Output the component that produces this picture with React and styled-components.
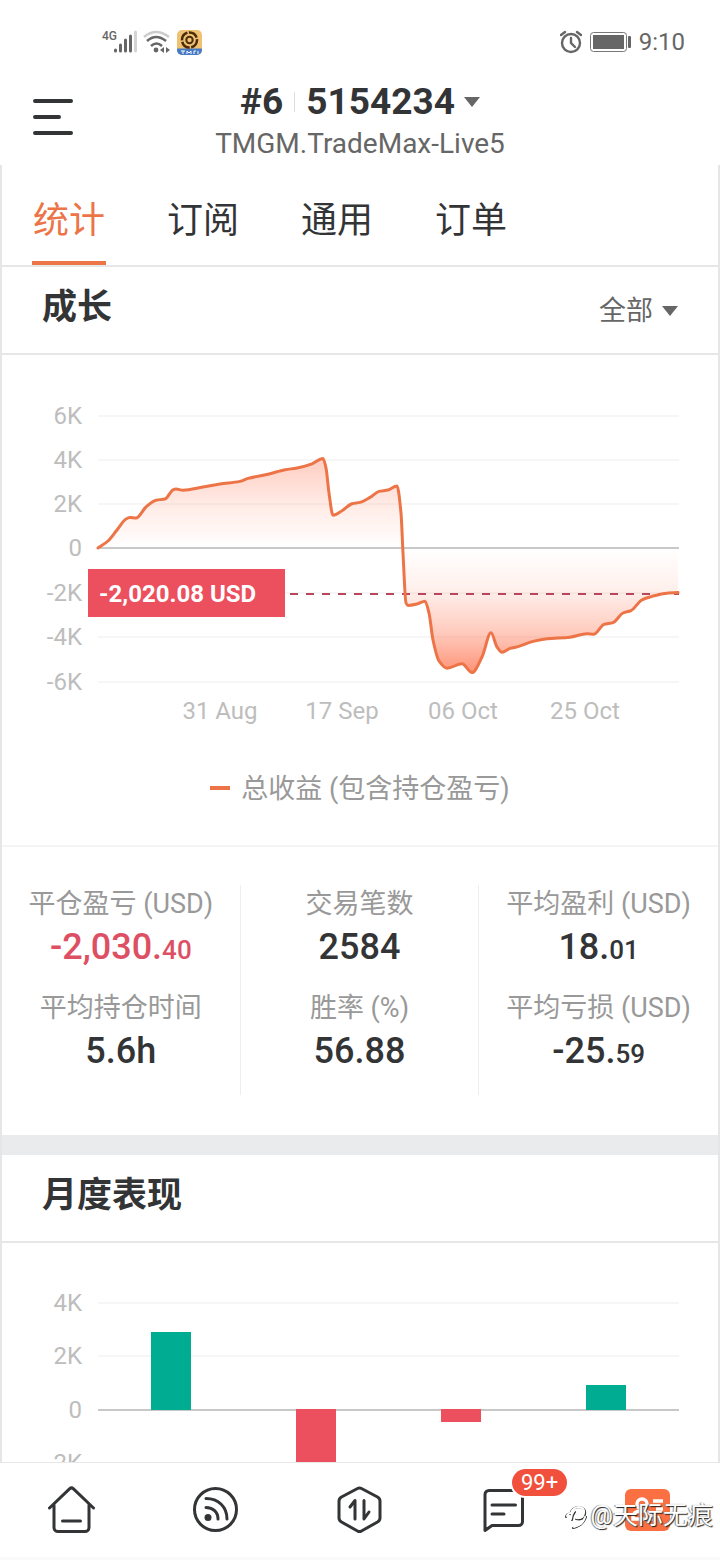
import React, { useState } from "react";
import styled, { createGlobalStyle } from "styled-components";

const ORANGE = "#ec7447";
const RED = "#ec4f5e";
const GREEN = "#00ad92";
const DARK = "#333436";

const GlobalStyle = createGlobalStyle`
  * {
    box-sizing: border-box;
  }

  body {
    margin: 0;
    background: #fff;
    color: ${DARK};
    font-family: Roboto, "Noto Sans CJK SC", sans-serif;
  }

  button,
  select {
    margin: 0;
    padding: 0;
    border: none;
    background: none;
    color: inherit;
    font: inherit;
    cursor: pointer;
  }

  svg {
    display: block;
  }
`;

const Screen = styled.div`
  display: flex;
  flex-direction: column;
  height: 100vh;
`;

const StatusBar = styled.div`
  display: flex;
  flex-shrink: 0;
  align-items: center;
  justify-content: space-between;
  height: 72px;
  padding: 12px 35px 0 102px;
  color: #666;
  font-size: 24px;
`;

const StatusGroup = styled.div`
  display: flex;
  align-items: center;
  gap: ${({ $gap }) => $gap}px;
`;

const NetworkType = styled.span`
  align-self: flex-start;
  margin-right: -4px;
  font-size: 12px;
  line-height: 12px;
  font-weight: 500;
`;

const Header = styled.header`
  display: grid;
  flex-shrink: 0;
  grid-template-columns: 1fr auto 1fr;
  align-items: start;
  height: 93px;
  padding: 8px 33px 0;
`;

const MenuButton = styled.button`
  justify-self: start;
  margin-top: 18px;
`;

const Account = styled.button`
  display: flex;
  flex-direction: column;
  align-items: center;
`;

const AccountNumber = styled.span`
  display: flex;
  align-items: center;
  font-size: 37px;
  line-height: 44px;
  font-weight: 700;
`;

const Separator = styled.span`
  width: 1px;
  height: 20px;
  margin: 0 11px;
  background: #ddd;
`;

const AccountServer = styled.span`
  font-size: 28px;
  line-height: 40px;
  color: #666;
`;

const CaretIcon = styled.svg`
  width: 16px;
  height: 10px;
  margin-left: 9px;
  fill: #666;
  pointer-events: none;
`;

const Content = styled.main`
  flex: 1;
  min-height: 0;
  overflow-y: auto;
  scrollbar-width: none;
  border: solid #e6e6e6;
  border-width: 0 2px;
`;

const Tabs = styled.div`
  display: flex;
  gap: 60px;
  height: 102px;
  padding: 0 30px;
  border-bottom: 2px solid #e6e6e6;
`;

const Tab = styled.button`
  padding: 8px 1px 0;
  border-bottom: 4px solid ${({ $active }) => ($active ? ORANGE : "transparent")};
  color: ${({ $active }) => ($active ? ORANGE : DARK)};
  font-size: 36px;
`;

const SectionHeader = styled.div`
  display: flex;
  align-items: center;
  justify-content: space-between;
  height: 88px;
  padding: 2px 40px 0;
  border-bottom: 2px solid #e6e6e6;
`;

const SectionTitle = styled.h2`
  margin: 0;
  padding-bottom: 6px;
  font-size: 35px;
  line-height: 48px;
  font-weight: 700;
`;

const Period = styled.label`
  display: flex;
  align-items: center;
  color: #666;
`;

const PeriodSelect = styled.select`
  appearance: none;
  font-size: 27px;
  line-height: 40px;
`;

const Chart = styled.svg`
  width: 100%;
  height: auto;
`;

const AxisLabel = styled.text`
  fill: #bdbdbd;
  font-size: 24px;
  text-anchor: ${({ $anchor }) => $anchor || "end"};
`;

const TagLabel = styled.text`
  fill: #fff;
  font-size: 24px;
  font-weight: 700;
`;

const Legend = styled.div`
  display: flex;
  align-items: center;
  justify-content: center;
  gap: 11px;
  height: 112px;
  padding-bottom: 8px;
  border-bottom: 2px solid #f4f4f4;
  color: #999;
  font-size: 27px;
`;

const LegendMark = styled.span`
  width: 20px;
  height: 4px;
  margin-top: 4px;
  background: ${ORANGE};
`;

const Stats = styled.div`
  display: grid;
  grid-template-columns: repeat(3, 1fr);
  padding: 38px 0 40px;
`;

const StatColumn = styled.dl`
  display: grid;
  grid-template-rows: 104px 106px;
  margin: 0;
  border-right: 1px solid #eee;
  text-align: center;

  &:last-child {
    border-right: none;
  }
`;

const StatLabel = styled.dt`
  color: #999;
  font-size: 27px;
  line-height: 38px;
`;

const StatValue = styled.dd`
  margin: 0;
  color: ${({ $negative }) => ($negative ? "#dd5064" : DARK)};
  font-size: 36px;
  line-height: 48px;
  font-weight: 500;

  small {
    font-size: 26px;
  }
`;

const Gutter = styled.div`
  height: 20px;
  background: #e9ebed;
`;

const NavBar = styled.nav`
  position: relative;
  display: grid;
  flex-shrink: 0;
  grid-template-columns: repeat(5, 1fr);
  height: 98px;
  padding-bottom: 2px;
  border-top: 1px solid #e8e8e8;
  border-bottom: 3px solid #fafafa;
  background: #fff;
`;

const NavItem = styled.a`
  display: flex;
  align-items: center;
  justify-content: center;
`;

const IconSlot = styled.span`
  position: relative;
`;

const Badge = styled.span`
  position: absolute;
  top: -16px;
  left: 32px;
  padding: 0 9px;
  border-radius: 14px;
  box-shadow: 0 0 0 2px #fff;
  background: #f1503d;
  color: #fff;
  font-size: 22px;
  line-height: 27px;
`;

const Watermark = styled.div`
  position: absolute;
  right: 7px;
  bottom: 23px;
  display: flex;
  align-items: center;
  gap: 1px;
  color: #fff;
  font-size: 25px;
  line-height: 36px;
  text-shadow: 1px 1px 1px #222, -1px 0 1px #888;
  pointer-events: none;
`;

// x and y of the profit curve, in chart units
const GROWTH = [
  [96, 193], [106, 186], [115, 175], [124, 164], [128, 162.6], [134, 163],
  [144, 152], [154, 145.2], [163, 144], [171, 134.8], [174, 134], [181, 135.2],
  [201, 132], [218, 129], [238, 126.4], [246, 123.4], [266, 119.2], [283, 114.7],
  [295, 113], [310, 108.8], [321, 103.4], [324, 113], [327, 138], [331, 160.3],
  [340, 155.8], [350, 148.8], [358, 147.4], [368, 142.4], [377, 136.4],
  [386, 135], [395, 131], [399, 158], [401, 198], [404, 248], [406, 250.4],
  [415, 249], [423, 246.2], [427, 258], [431, 285], [437, 306], [445, 313.2],
  [460, 308.8], [470, 317.6], [480, 302], [489, 277.8], [495, 292],
  [500, 297.2], [508, 293.4], [516, 291.6], [531, 286.4], [545, 283.8],
  [568, 282.2], [585, 278.8], [592, 279.2], [602, 269.4], [611, 267.6],
  [621, 258], [629, 255.6], [640, 244.8], [650, 241.4], [663, 238.4],
  [676, 237.6],
];

const GROWTH_TICKS = [
  ["6K", 61], ["4K", 105], ["2K", 149], ["0", 193],
  ["-2K", 238], ["-4K", 282], ["-6K", 327],
];

const GROWTH_DATES = [
  ["31 Aug", 218], ["17 Sep", 340], ["06 Oct", 461], ["25 Oct", 583],
];

const MONTH_TICKS = [["4K", 60], ["2K", 113], ["0", 167], ["-2K", 220]];

const MONTHS = [
  { x: 149, value: 2930 },
  { x: 294, value: -2300 },
  { x: 439, value: -480 },
  { x: 584, value: 930 },
];

// monotone cubic curve, so that the line never overshoots a point
const curve = (points) => {
  const slopes = points.slice(1).map(([x, y], i) => (y - points[i][1]) / (x - points[i][0]));
  const tangents = points.map((_, i) => {
    const before = slopes[i - 1];
    const after = slopes[i];
    if (before === undefined) return after;
    if (after === undefined) return before;
    return before * after <= 0 ? 0 : (2 * before * after) / (before + after);
  });

  return points.slice(1).reduce((path, [x, y], i) => {
    const [px, py] = points[i];
    const dx = (x - px) / 3;
    return `${path} C${px + dx} ${py + dx * tangents[i]} ${x - dx} ${y - dx * tangents[i + 1]} ${x} ${y}`;
  }, `M${points[0][0]} ${points[0][1]}`);
};

const Caret = () => (
  <CaretIcon viewBox="0 0 16 10" aria-hidden="true">
    <path d="M0 0h16L8 10z" />
  </CaretIcon>
);

const Axis = ({ ticks }) =>
  ticks.map(([label, y]) => (
    <g key={label}>
      <AxisLabel x="80" y={y + 8}>{label}</AxisLabel>
      <path
        d={`M96 ${y}H677`}
        stroke={label === "0" ? "#c8c8c8" : "#f6f6f6"}
        strokeWidth="2"
      />
    </g>
  ));

const GrowthChart = () => {
  const line = curve(GROWTH);
  return (
    <Chart viewBox="0 0 716 380" role="img" aria-label="成长">
      <defs>
        <linearGradient id="growth" gradientUnits="userSpaceOnUse" x1="0" y1="103" x2="0" y2="317">
          <stop offset="0" stopColor="#ff8f73" stopOpacity="0.45" />
          <stop offset="0.2" stopColor="#ff8f73" stopOpacity="0.2" />
          <stop offset="0.42" stopColor="#ff8f73" stopOpacity="0" />
          <stop offset="0.62" stopColor="#ff8668" stopOpacity="0.13" />
          <stop offset="0.82" stopColor="#ff7f5f" stopOpacity="0.42" />
          <stop offset="1" stopColor="#ff7855" stopOpacity="0.8" />
        </linearGradient>
      </defs>
      <Axis ticks={GROWTH_TICKS} />
      <path d={`${line} V193 H96 Z`} fill="url(#growth)" />
      <path d="M288 239H677" stroke="#b9465c" strokeWidth="2" strokeDasharray="8 8" />
      <path d={line} fill="none" stroke={ORANGE} strokeWidth="3" strokeLinecap="round" strokeLinejoin="round" />
      <rect x="86" y="214" width="197" height="48" fill={RED} />
      <TagLabel x="97" y="247">-2,020.08 USD</TagLabel>
      {GROWTH_DATES.map(([label, x]) => (
        <AxisLabel key={label} x={x} y="364" $anchor="middle">{label}</AxisLabel>
      ))}
    </Chart>
  );
};

const MonthChart = () => (
  <Chart viewBox="0 0 716 290" role="img" aria-label="月度表现">
    <Axis ticks={MONTH_TICKS} />
    {MONTHS.map(({ x, value }) => {
      const height = Math.round((Math.abs(value) * 53) / 2000);
      return (
        <rect
          key={x}
          x={x}
          y={value > 0 ? 167 - height : 166}
          width="40"
          height={height}
          fill={value > 0 ? GREEN : RED}
        />
      );
    })}
  </Chart>
);

const Stat = ({ label, value, decimals, negative }) => (
  <div>
    <StatLabel>{label}</StatLabel>
    <StatValue $negative={negative}>
      {value}
      {decimals && <small>{decimals}</small>}
    </StatValue>
  </div>
);

const SignalIcon = () => (
  <svg width="24" height="24" viewBox="0 0 24 24" strokeWidth="3" strokeLinecap="round" stroke="#666">
    <path d="M2.500 20v1M7.500 15v6M12.500 10v11M17.500 6v15" />
    <path d="M22.500 2v19" stroke="#d4d4d4" />
  </svg>
);

const WifiIcon = () => (
  <svg width="28" height="24" viewBox="0 0 28 24" fill="none" stroke="#666" strokeWidth="2.600">
    <path d="M1 7Q13 -3 26 7" stroke="#ccc" />
    <path d="M4 11Q13 3 23 11M8 16q5.500-5 11 0" />
    <circle cx="13" cy="20" r="2.400" fill="#666" stroke="none" />
    <path d="M21 17v6l-4-3zM23 17v6l4-3z" fill="#666" stroke="none" />
  </svg>
);

const AppBadgeIcon = () => (
  <svg width="25" height="25" viewBox="0 0 25 25">
    <rect width="25" height="25" rx="5" fill="#efc173" />
    <path d="M0 18.500h25V20a5 5 0 0 1-5 5H5a5 5 0 0 1-5-5z" fill="#477bc5" />
    <circle cx="12.500" cy="10" r="7.500" fill="none" stroke="#4a2b08" strokeWidth="2.500" strokeDasharray="10 1.500" />
    <circle cx="12.500" cy="10" r="3.200" fill="none" stroke="#4a2b08" strokeWidth="2" />
    <path d="M4 21h4M6 21v3M10 24v-3l2 2 2-2v3M17 24v-3h2M21 21v3" fill="none" stroke="#fff" />
  </svg>
);

const AlarmIcon = () => (
  <svg width="22" height="24" viewBox="0 0 22 24" fill="none" stroke="#666" strokeWidth="2.400" strokeLinecap="round">
    <circle cx="11" cy="13" r="9" />
    <path d="M11 8v5l4 4M1 5l4-3M21 5l-4-3" />
  </svg>
);

const BatteryIcon = () => (
  <svg width="41" height="20" viewBox="0 0 41 20">
    <rect x="0.500" y="0.500" width="36" height="19" rx="3" fill="none" stroke="#777" />
    <rect x="3" y="3" width="31" height="14" fill="#666" />
    <rect x="38" y="4" width="3" height="12" rx="1" fill="#666" />
  </svg>
);

const NavIcon = ({ children }) => (
  <svg
    width="48"
    height="48"
    viewBox="0 0 48 48"
    fill="none"
    stroke={DARK}
    strokeWidth="3"
    strokeLinecap="round"
    strokeLinejoin="round"
    aria-hidden="true"
  >
    {children}
  </svg>
);

const NAV_ITEMS = [
  {
    id: "home",
    icon: (
      <NavIcon>
        <path d="M1.500 23 21.500 3.800q2-1.800 4 0L45.500 23M6 20v22.500a4 4 0 0 0 4 4h27a4 4 0 0 0 4-4V20M14.500 36h18" />
      </NavIcon>
    ),
  },
  {
    id: "feed",
    icon: (
      <NavIcon>
        <circle cx="23.500" cy="24.500" r="21" />
        <path d="M14 13.500C26.500 13.500 35 22 35 34M14 22.500c7 0 12 4.500 12 11.500" />
        <circle cx="16" cy="32.500" r="3.500" fill={DARK} stroke="none" />
      </NavIcon>
    ),
  },
  {
    id: "trade",
    icon: (
      <NavIcon>
        <path d="M21.500 3.500q2-1.200 4 0L41.500 12q2.500 1.500 2.500 4v17q0 2.500-2.500 4L25.500 46q-2 1.200-4 0L5.500 37q-2.500-1.500-2.500-4V16q0-2.500 2.500-4z" />
        <path d="M14 22 19 15.500V34M28 15.500V34L33 27" />
      </NavIcon>
    ),
  },
  {
    id: "messages",
    badge: "99+",
    icon: (
      <NavIcon>
        <path d="M5 45.500V9.500a4 4 0 0 1 4-4h29.500a4 4 0 0 1 4 4v27a4 4 0 0 1-4 4H12z" />
        <path d="M12 20h23.500M12 29h12" />
      </NavIcon>
    ),
  },
  {
    id: "profile",
    icon: (
      <svg width="48" height="48" viewBox="0 0 48 48" fill="none" stroke="#fff" strokeWidth="3.500" aria-hidden="true">
        <rect x="1" y="4" width="45" height="42" rx="6" fill="#fa7043" stroke="none" />
        <circle cx="18" cy="19" r="5" />
        <path d="M9 34v-2q0-6 9-6t9 6v2zM29 16h10M32 24h7" />
      </svg>
    ),
  },
];

const TABS = ["统计", "订阅", "通用", "订单"];

const App = () => {
  const [activeTab, setActiveTab] = useState(TABS[0]);

  return (
    <Screen>
      <GlobalStyle />
      <StatusBar>
        <StatusGroup $gap={6}>
          <StatusGroup $gap={0}>
            <NetworkType>4G</NetworkType>
            <SignalIcon />
          </StatusGroup>
          <WifiIcon />
          <AppBadgeIcon />
        </StatusGroup>
        <StatusGroup $gap={8}>
          <AlarmIcon />
          <BatteryIcon />
          <span>9:10</span>
        </StatusGroup>
      </StatusBar>

      <Header>
        <MenuButton type="button" aria-label="菜单">
          <svg width="40" height="38" viewBox="0 0 40 38" stroke={DARK} strokeWidth="4" strokeLinecap="round">
            <path d="M2 3h36M2 19h24M2 35h36" />
          </svg>
        </MenuButton>
        <Account type="button" aria-haspopup="listbox">
          <AccountNumber>
            #6
            <Separator />
            5154234
            <Caret />
          </AccountNumber>
          <AccountServer>TMGM.TradeMax-Live5</AccountServer>
        </Account>
      </Header>

      <Content>
        <Tabs role="tablist">
          {TABS.map((tab) => (
            <Tab
              key={tab}
              type="button"
              role="tab"
              aria-selected={tab === activeTab}
              $active={tab === activeTab}
              onClick={() => setActiveTab(tab)}
            >
              {tab}
            </Tab>
          ))}
        </Tabs>

        <section>
          <SectionHeader>
            <SectionTitle>成长</SectionTitle>
            <Period>
              <PeriodSelect aria-label="成长">
                <option>全部</option>
              </PeriodSelect>
              <Caret />
            </Period>
          </SectionHeader>
          <GrowthChart />
          <Legend>
            <LegendMark />
            总收益 (包含持仓盈亏)
          </Legend>
          <Stats>
            <StatColumn>
              <Stat label="平仓盈亏 (USD)" value="-2,030." decimals="40" negative />
              <Stat label="平均持仓时间" value="5.6h" />
            </StatColumn>
            <StatColumn>
              <Stat label="交易笔数" value="2584" />
              <Stat label="胜率 (%)" value="56.88" />
            </StatColumn>
            <StatColumn>
              <Stat label="平均盈利 (USD)" value="18." decimals="01" />
              <Stat label="平均亏损 (USD)" value="-25." decimals="59" />
            </StatColumn>
          </Stats>
        </section>

        <Gutter />

        <section>
          <SectionHeader>
            <SectionTitle>月度表现</SectionTitle>
          </SectionHeader>
          <MonthChart />
        </section>
      </Content>

      <NavBar>
        {NAV_ITEMS.map(({ id, icon, badge }) => (
          <NavItem key={id} href={`#${id}`} aria-label={id}>
            <IconSlot>
              {icon}
              {badge && <Badge>{badge}</Badge>}
            </IconSlot>
          </NavItem>
        ))}
        <Watermark>
          <svg width="26" height="28" viewBox="0 0 26 28" fill="none" strokeLinecap="round">
            <path d="M2 15q1-4 4-3 2-7 9-7 7 1 6 7-1 7-9 5M11 10q-3 4-3 8M9 26q10-2 13-11" stroke="#333" strokeWidth="2" />
            <path d="M3 14q1-3 4-3 2-6 8-6 6 1 5 6-1 6-8 5M10 9q-3 4-3 8M10 25q9-2 11-10" stroke="#fff" strokeWidth="2" />
          </svg>
          @天际无痕
        </Watermark>
      </NavBar>
    </Screen>
  );
};

export default App;
